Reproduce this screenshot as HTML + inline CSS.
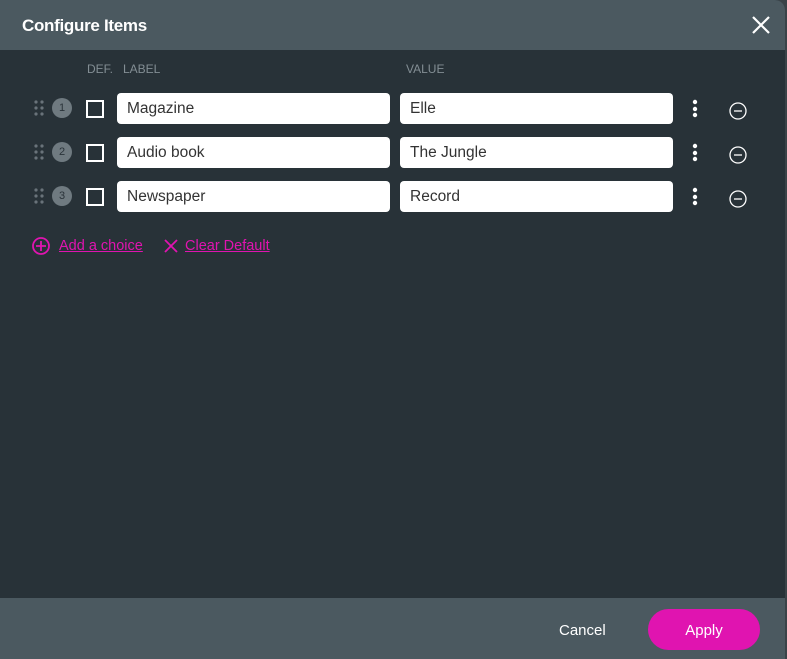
<!DOCTYPE html>
<html><head><style>
body{margin:0;width:787px;height:659px;background:#3a4348;position:relative;overflow:hidden;font-family:"Liberation Sans",sans-serif}
.dlg{position:absolute;left:0;top:0;width:785px;height:659px;background:#283238;border-radius:0 10px 0 0;overflow:hidden}
.hd{position:absolute;left:0;top:0;right:0;height:50px;background:#4b5960}
.hd h1{position:absolute;left:22px;top:16px;margin:0;font-size:17px;font-weight:bold;color:#fff;letter-spacing:-0.3px}
.ft{position:absolute;left:0;bottom:0;right:0;height:61px;background:#4b5960}
.col{position:absolute;top:62px;font-size:12px;color:#838e94}
.inp{position:absolute;height:31px;background:#fff;border-radius:4px;font-size:15.5px;color:#333;line-height:31px;padding-left:10px;box-sizing:border-box}
.cb{position:absolute;left:86px;width:14px;height:14px;border:2px solid #fff}
.num{position:absolute;left:52px;width:20px;height:20px;border-radius:50%;background:#6f7a80;color:#2a3339;font-size:11px;text-align:center;line-height:21px}
.lk{position:absolute;top:238px;color:#e014b0;font-size:14.5px;text-decoration:underline}
</style></head><body>
<div class="dlg">
<div class="hd"><h1>Configure Items</h1>
<svg style="position:absolute;left:752px;top:16px" width="18" height="18"><path d="M1 1L17 17M17 1L1 17" stroke="#fff" stroke-width="2.2"/></svg></div>
<div class="col" style="left:87px">DEF.</div>
<div class="col" style="left:123px">LABEL</div>
<div class="col" style="left:406px">VALUE</div>

<svg style="position:absolute;left:0;top:0" width="785" height="260">
<g fill="#69737a">
<circle cx="36" cy="102" r="1.6"/><circle cx="42" cy="102" r="1.6"/><circle cx="36" cy="108" r="1.6"/><circle cx="42" cy="108" r="1.6"/><circle cx="36" cy="114" r="1.6"/><circle cx="42" cy="114" r="1.6"/>
<circle cx="36" cy="146" r="1.6"/><circle cx="42" cy="146" r="1.6"/><circle cx="36" cy="152" r="1.6"/><circle cx="42" cy="152" r="1.6"/><circle cx="36" cy="158" r="1.6"/><circle cx="42" cy="158" r="1.6"/>
<circle cx="36" cy="190" r="1.6"/><circle cx="42" cy="190" r="1.6"/><circle cx="36" cy="196" r="1.6"/><circle cx="42" cy="196" r="1.6"/><circle cx="36" cy="202" r="1.6"/><circle cx="42" cy="202" r="1.6"/>
</g>
<g fill="#fff">
<circle cx="695" cy="102" r="2.2"/><circle cx="695" cy="109" r="2.2"/><circle cx="695" cy="115" r="2.2"/>
<circle cx="695" cy="146" r="2.2"/><circle cx="695" cy="153" r="2.2"/><circle cx="695" cy="159" r="2.2"/>
<circle cx="695" cy="190" r="2.2"/><circle cx="695" cy="197" r="2.2"/><circle cx="695" cy="203" r="2.2"/>
</g>
<g fill="none" stroke="#fff" stroke-width="1.3">
<circle cx="738" cy="111" r="8"/><path d="M734 111H742"/>
<circle cx="738" cy="155" r="8"/><path d="M734 155H742"/>
<circle cx="738" cy="199" r="8"/><path d="M734 199H742"/>
</g>
<g fill="none" stroke="#e014b0" stroke-width="1.8">
<circle cx="41" cy="246" r="8"/><path d="M36 246H46M41 241V251"/>
<path d="M165 240L177 252M177 240L165 252"/>
</g>
</svg>
<div class="num" style="top:98px">1</div><div class="cb" style="top:100px"></div>
<div class="num" style="top:142px">2</div><div class="cb" style="top:144px"></div>
<div class="num" style="top:186px">3</div><div class="cb" style="top:188px"></div>
<div class="inp" style="left:117px;top:93px;width:273px">Magazine</div>
<div class="inp" style="left:400px;top:93px;width:273px">Elle</div>
<div class="inp" style="left:117px;top:137px;width:273px">Audio book</div>
<div class="inp" style="left:400px;top:137px;width:273px">The Jungle</div>
<div class="inp" style="left:117px;top:181px;width:273px">Newspaper</div>
<div class="inp" style="left:400px;top:181px;width:273px">Record</div>
<div class="lk" style="left:59px">Add a choice</div>
<div class="lk" style="left:185px">Clear Default</div>

<div class="ft">
<div style="position:absolute;left:559px;top:24px;color:#fff;font-size:15px">Cancel</div>
<div style="position:absolute;left:648px;top:11px;width:112px;height:41px;border-radius:21px;background:#e014b0;color:#fff;font-size:15px;text-align:center;line-height:43px">Apply</div>
</div>
</div>
</body></html>
